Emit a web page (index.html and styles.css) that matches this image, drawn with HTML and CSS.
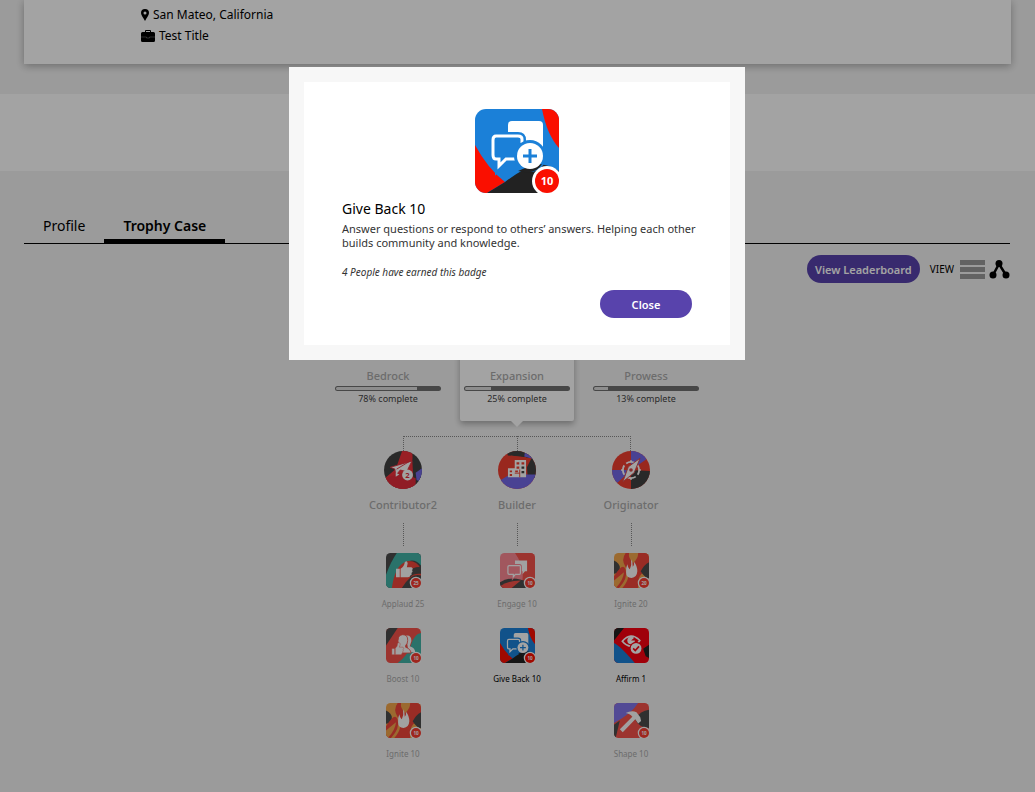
FILE: index.html
```html
<!DOCTYPE html>
<html lang="en">
<head>
    <meta charset="UTF-8">
    <meta name="viewport" content="width=device-width, initial-scale=1.0">
    <title>Trophy Case</title>
    <link rel="stylesheet" href="styles.css">
</head>
<body>
    <!-- shared badge artwork -->
    <svg class="sprite" aria-hidden="true">
        <defs>
            <clipPath id="tile"><rect width="84" height="84" rx="11"/></clipPath>
            <clipPath id="disc"><circle cx="42" cy="42" r="42"/></clipPath>
        </defs>
        <symbol id="ring" viewBox="0 0 84 84">
            <circle cx="72" cy="72" r="15" fill="#fff"/>
            <circle cx="72" cy="72" r="12" fill="#fa0f00"/>
        </symbol>
        <symbol id="flame" viewBox="0 0 84 84">
            <g clip-path="url(#tile)">
                <rect width="84" height="84" fill="#f29423"/>
                <path d="M0 18Q14 24 14 36T0 50z" fill="#222"/>
                <path d="M28 0H84V28Q66 36 58 84H12Q34 60 28 40T0 56V84H20Q44 56 28 34Q16 16 28 0z" fill="#f01c0c"/>
                <path d="M0 84V66Q14 54 24 46Q22 66 4 84z" fill="#f29423"/>
                <path d="M36 0H58Q58 14 46 24Q34 12 36 0z" fill="#f29423"/>
                <path d="M84 22V62Q74 60 64 44Q72 28 84 22z" fill="#222"/>
                <path d="M58 84Q56 62 66 50Q74 60 84 62V84z" fill="#f29423"/>
                <path d="M41 15Q46 21 45 33Q49 29 48 21Q56 31 56 44Q55 59 42 60Q29 59 29 46Q28 36 32 27Q34 37 38 39Q43 29 41 15z" fill="#fff"/>
            </g>
        </symbol>
        <symbol id="giveback" viewBox="0 0 84 84">
            <g clip-path="url(#tile)">
                <rect width="84" height="84" fill="#1b80d8"/>
                <path d="M67 0Q72 26 84 39V0z" fill="#fa0f00"/>
                <path d="M0 36Q13 60 30 73L12 84H0z" fill="#fa0f00"/>
                <path d="M12 84L30 73Q50 58 62 55Q76 56 84 62V84z" fill="#222"/>
                <rect x="33" y="12" width="35" height="30" rx="4" fill="#fff"/>
                <path d="M21 27H43Q47 27 47 31V46Q47 50 43 50H31L24 57V50H21Q18 50 18 46V31Q18 27 21 27z" fill="#1b80d8" stroke="#1b80d8" stroke-width="8"/>
                <path d="M47 34V30Q47 27 43 27H21Q18 27 18 31V46Q18 50 21 50H24V57L31 50H42" fill="none" stroke="#fff" stroke-width="3"/>
                <circle cx="55" cy="47" r="16" fill="#1b80d8"/>
                <path d="M43 62Q53 57 67 55Q61 65 49 63z" fill="#222"/>
                <circle cx="55" cy="47" r="13" fill="#fff"/>
                <path d="M55 40V54M48 47H62" stroke="#1b80d8" stroke-width="3"/>
            </g>
        </symbol>
    </svg>

    <header class="hero">
        <div class="user-card">
            <p>
                <svg class="pin" viewBox="0 0 8 12"><path fill-rule="evenodd" d="M4 0a4 4 0 0 0-4 4c0 2.500 2.500 4.500 4 8 1.500-3.500 4-5.500 4-8a4 4 0 0 0-4-4zm0 2.500a1.500 1.500 0 1 1 0 3 1.500 1.500 0 0 1 0-3z"/></svg>
                San Mateo, California
            </p>
            <p>
                <svg class="case" viewBox="0 0 14 12"><path fill-rule="evenodd" d="M4 2V1q0-1 1-1h4q1 0 1 1v1h2.500Q14 2 14 3.500V10.500q0 1.500-1.500 1.500h-11Q0 12 0 10.500V3.500Q0 2 1.500 2zm1 0h4V1H5z"/><path d="M0 7h5.500v1h3V7H14" fill="none" stroke="#777" stroke-width=".6"/></svg>
                Test Title
            </p>
        </div>
    </header>
    <div class="band"></div>

    <main>
        <nav class="tabs">
            <a href="#profile">Profile</a>
            <a href="#trophy" class="active">Trophy Case</a>
        </nav>

        <div class="toolbar">
            <button type="button" class="btn">View Leaderboard</button>
            <span class="view-label">VIEW</span>
            <button type="button" class="icon-btn" aria-label="List view">
                <svg width="25" height="19" viewBox="0 0 25 19"><path d="M0 0h25v5H0zM0 7h25v5H0zM0 14h25v5H0z" fill="#999"/></svg>
            </button>
            <button type="button" class="icon-btn" aria-label="Tree view">
                <svg width="21" height="19" viewBox="0 0 21 19"><path d="M4 15L10 4L17 15" fill="none" stroke="#000" stroke-width="2.500"/><circle cx="10" cy="3.500" r="3.500"/><circle cx="4" cy="15" r="3.500"/><circle cx="17" cy="15" r="3.500"/></svg>
            </button>
        </div>

        <section class="stages">
            <div class="stage">
                <h3>Bedrock</h3>
                <div class="bar"><span style="width: 78%"></span></div>
                <small>78% complete</small>
            </div>
            <div class="stage selected">
                <h3>Expansion</h3>
                <div class="bar"><span style="width: 25%"></span></div>
                <small>25% complete</small>
            </div>
            <div class="stage">
                <h3>Prowess</h3>
                <div class="bar"><span style="width: 13%"></span></div>
                <small>13% complete</small>
            </div>
        </section>

        <div class="connector"><span></span><span></span></div>

        <section class="tracks">
            <div class="track">
                <svg class="medal" viewBox="0 0 84 84">
                    <g clip-path="url(#disc)">
                        <rect width="84" height="84" fill="#222"/>
                        <path d="M40 0H62L70 84H10L2 60L26 40z" fill="#f0101a"/>
                        <path d="M62 10Q68 50 84 56V84H66z" fill="#222"/>
                        <path d="M70 48L84 38V70L72 64z" fill="#5c50e6"/>
                        <path d="M0 60L40 48L70 60V84H0z" fill="#e00b1c"/>
                    </g>
                    <path d="M14 36L62 22L50 46L36 42L26 54L24 40zM58 22L28 40" fill="#fff" stroke="#e00b1c" stroke-width="2"/>
                    <path d="M26 48l8 4-8 5z" fill="#fff"/>
                    <circle cx="52" cy="53" r="12" fill="#fff"/>
                    <text x="52" y="59" class="num">2</text>
                </svg>
                <h4>Contributor2</h4>
                <div class="line"></div>
                <div class="badge">
                    <svg viewBox="0 0 84 84">
                        <g clip-path="url(#tile)">
                            <rect width="84" height="84" fill="#222"/>
                            <path d="M26 0H84V30Q66 8 42 26Q22 46 18 84H0V52Q12 20 26 0z" fill="#16a394"/>
                            <path d="M14 84Q22 28 50 20Q72 16 84 38V54Q60 46 38 84z" fill="#f01c0c"/>
                            <path d="M52 46Q66 32 84 34V50Q66 48 58 58z" fill="#222"/>
                        </g>
                        <path d="M24 38h9v20h-9zM35 38Q44 32 45 22Q51 17 52 25L50 34H61Q67 38 62 41Q66 45 61 48Q63 53 58 54Q58 58 53 58H35z" fill="#fff"/>
                        <use href="#ring"/>
                        <text x="72" y="76" class="count">25</text>
                    </svg>
                    <p>Applaud 25</p>
                </div>
                <div class="badge">
                    <svg viewBox="0 0 84 84">
                        <g clip-path="url(#tile)">
                            <rect width="84" height="84" fill="#f52b20"/>
                            <path d="M0 0H28L0 42z" fill="#222"/>
                            <path d="M84 12V84H28Q52 66 60 40T84 12z" fill="#16a394"/>
                        </g>
                        <path d="M48 18Q61 16 61 31L57 44Q70 48 70 58H54z" fill="#fff"/>
                        <path d="M40 16Q53 16 52 30Q52 38 47 42V46Q59 50 60 60H30V42Q25 16 40 16z" fill="#fff" stroke="#f52b20" stroke-width="2"/>
                        <path d="M14 49h7v15h-7zM22 49Q28 45 28 36Q34 33 34 40L32 46H41Q44 50 41 52Q43 56 40 57Q41 61 38 61Q38 65 34 64H22z" fill="#fff" stroke="#f52b20"/>
                        <use href="#ring"/>
                        <text x="72" y="76" class="count">10</text>
                    </svg>
                    <p>Boost 10</p>
                </div>
                <div class="badge">
                    <svg viewBox="0 0 84 84">
                        <use href="#flame"/>
                        <use href="#ring"/>
                        <text x="72" y="76" class="count">10</text>
                    </svg>
                    <p>Ignite 10</p>
                </div>
            </div>

            <div class="track">
                <svg class="medal" viewBox="0 0 84 84">
                    <g clip-path="url(#disc)">
                        <rect width="84" height="84" fill="#f0200f"/>
                        <path d="M18 0H84V60H66L62 14L22 10z" fill="#222"/>
                        <path d="M60 0L84 20L58 12z" fill="#5c50e6"/>
                        <path d="M28 10L74 16L62 40L40 50z" fill="#f0200f"/>
                        <path d="M0 68L26 52H84V84H0z" fill="#5c50e6"/>
                    </g>
                    <path d="M22 38H37V20H62V58H22z" fill="#fff"/>
                    <path d="M41 25h6v5h-6zM52 25h6v5h-6zM41 34h6v5h-6zM26 43h5v4h-5zM38 43h6v4h-6zM26 51h5v4h-5z" fill="#f0200f"/>
                    <path d="M52 34h6v5h-6zM52 44h6v5h-6z" fill="#222"/>
                    <path d="M48 41v17M37 49h11" stroke="#f0200f" stroke-width="2"/>
                </svg>
                <h4>Builder</h4>
                <div class="line"></div>
                <div class="badge">
                    <svg viewBox="0 0 84 84">
                        <g clip-path="url(#tile)">
                            <rect width="84" height="84" fill="#ff6f7d"/>
                            <path d="M36 0H84V84H48Q66 44 36 0z" fill="#f52b20"/>
                            <path d="M0 70Q30 52 66 70L84 84H0z" fill="#222"/>
                            <path d="M0 80Q20 66 50 66L28 84H0z" fill="#f52b20"/>
                        </g>
                        <path d="M36 18H65V44H60L54 51V44H36z" fill="#fff"/>
                        <path d="M22 30H47Q49 30 49 33V48Q49 51 47 51H37L32 57V51H22Q19 51 19 48V33Q19 30 22 30z" fill="#ff6f7d" stroke="#ff6f7d" stroke-width="7"/>
                        <path d="M22 30H47Q49 30 49 33V48Q49 51 47 51H37L32 57V51H22Q19 51 19 48V33Q19 30 22 30z" fill="#ff6f7d" stroke="#fff" stroke-width="3"/>
                        <use href="#ring"/>
                        <text x="72" y="76" class="count">10</text>
                    </svg>
                    <p>Engage 10</p>
                </div>
                <div class="badge earned">
                    <svg viewBox="0 0 84 84">
                        <use href="#giveback"/>
                        <use href="#ring"/>
                        <text x="72" y="76" class="count">10</text>
                    </svg>
                    <p>Give Back 10</p>
                </div>
            </div>

            <div class="track">
                <svg class="medal" viewBox="0 0 84 84">
                    <g clip-path="url(#disc)">
                        <rect width="84" height="84" fill="#f0200f"/>
                        <path d="M42 42V0H66L76 18z" fill="#5c50e6"/>
                        <path d="M42 42L84 44V84H42z" fill="#222"/>
                        <path d="M42 42H0V62L12 70z" fill="#5c50e6"/>
                    </g>
                    <circle cx="42" cy="42" r="18" fill="none" stroke="#fff" stroke-width="4" stroke-dasharray="22 6" stroke-dashoffset="11"/>
                    <path d="M62 16L49 48L24 68L36 35z" fill="#fff" stroke="#d42a2a" stroke-width="2"/>
                    <circle cx="42" cy="42" r="4" fill="#d42a2a"/>
                    <path d="M42 20v5M42 59v5M20 42h5M59 42h5" stroke="#fff" stroke-width="3"/>
                </svg>
                <h4>Originator</h4>
                <div class="line"></div>
                <div class="badge">
                    <svg viewBox="0 0 84 84">
                        <use href="#flame"/>
                        <use href="#ring"/>
                        <text x="72" y="76" class="count">20</text>
                    </svg>
                    <p>Ignite 20</p>
                </div>
                <div class="badge earned">
                    <svg viewBox="0 0 84 84">
                        <g clip-path="url(#tile)">
                            <rect width="84" height="84" fill="#fa0010"/>
                            <path d="M0 0H24L0 30zM84 40L70 50L76 68L84 72z" fill="#222"/>
                            <path d="M0 36Q16 44 50 84H0z" fill="#1b80d8"/>
                        </g>
                        <path d="M20 32Q40 8 62 30Q52 44 40 44Q28 42 20 32z" fill="none" stroke="#fff" stroke-width="4"/>
                        <circle cx="41" cy="30" r="9" fill="#fff"/>
                        <path d="M41 30L50 22L52 30z" fill="#fa0010"/>
                        <circle cx="53" cy="49" r="16" fill="#fa0010"/>
                        <circle cx="53" cy="49" r="13" fill="#fff"/>
                        <path d="M46 49L51 54L60 44" fill="none" stroke="#fa0010" stroke-width="4"/>
                    </svg>
                    <p>Affirm 1</p>
                </div>
                <div class="badge">
                    <svg viewBox="0 0 84 84">
                        <g clip-path="url(#tile)">
                            <rect width="84" height="84" fill="#f52b20"/>
                            <path d="M0 0H58Q42 26 0 48z" fill="#6455e8"/>
                            <path d="M84 16V60Q60 60 50 38Q64 18 84 16z" fill="#222"/>
                            <path d="M0 52L14 42L4 84H0z" fill="#222"/>
                        </g>
                        <path d="M28 24Q42 17 54 22L63 34L65 43L58 49L51 39L21 70L14 63L44 33Q38 25 28 24z" fill="#fff"/>
                        <use href="#ring"/>
                        <text x="72" y="76" class="count">10</text>
                    </svg>
                    <p>Shape 10</p>
                </div>
            </div>
        </section>
    </main>

    <div class="overlay">
        <div class="modal" role="dialog" aria-labelledby="badgeTitle">
            <div class="modal-body">
                <svg class="modal-badge" viewBox="0 0 84 84">
                    <use href="#giveback"/>
                    <use href="#ring"/>
                    <text x="72" y="76" class="count">10</text>
                </svg>
                <h2 id="badgeTitle">Give Back 10</h2>
                <p>Answer questions or respond to others’ answers. Helping each other builds community and knowledge.</p>
                <p class="earned-by">4 People have earned this badge</p>
                <button type="button" class="btn close">Close</button>
            </div>
        </div>
    </div>
</body>
</html>
```
FILE: styles.css
```css
* {
    box-sizing: border-box;
}
body {
    margin: 0;
    background: #f3f3f3;
    color: #000;
    font-family: "Noto Sans", "Open Sans", sans-serif;
    font-size: 12px;
}
h2, h3, h4, p {
    margin: 0;
    font-weight: normal;
}
.sprite {
    position: absolute;
    width: 0;
    height: 0;
}
.count {
    font-size: 11px;
    font-weight: bold;
    fill: #fff;
    text-anchor: middle;
}
.num {
    font-size: 17px;
    font-weight: bold;
    fill: #e00b1c;
    text-anchor: middle;
}

/* header */
.hero {
    padding: 0 24px 30px;
}
.user-card {
    padding: 4px 20px 18px 117px;
    background: #fff;
    box-shadow: 0 2px 8px rgba(0, 0, 0, 0.3);
}
.user-card p {
    display: flex;
    align-items: center;
    gap: 4px;
    line-height: 21px;
}
.pin {
    width: 8px;
    height: 12px;
}
.case {
    width: 14px;
    height: 12px;
}
.band {
    height: 77px;
    background: #fff;
}

/* tabs and toolbar */
main {
    padding: 34px 25px 28px 24px;
}
.tabs {
    display: flex;
    border-bottom: 1px solid #000;
}
.tabs a {
    padding: 11px 19px 3px;
    border-bottom: 4px solid transparent;
    color: #000;
    font-size: 14px;
    line-height: 20px;
    text-decoration: none;
}
.tabs .active {
    border-color: #000;
    font-weight: 600;
}
.toolbar {
    display: flex;
    align-items: center;
    justify-content: flex-end;
    gap: 4px;
    margin-top: 11px;
}
.btn {
    height: 28px;
    padding: 0 8px;
    border: none;
    border-radius: 14px;
    background: #5843ac;
    color: #fff;
    font-family: inherit;
    font-size: 11px;
    font-weight: 600;
    cursor: pointer;
}
.view-label {
    margin: 0 2px 0 6px;
    font-size: 10px;
}
.icon-btn {
    padding: 0;
    border: none;
    background: none;
    cursor: pointer;
}
.icon-btn svg {
    display: block;
}

/* stages */
.stages {
    display: grid;
    grid-template-columns: repeat(3, 114px);
    justify-content: center;
    gap: 15px;
    margin-top: 17px;
}
.stage {
    position: relative;
    padding: 68px 4px 16px;
    text-align: center;
}
.stage h3 {
    color: #aaa;
    font-size: 11px;
    font-weight: 500;
    line-height: 16px;
}
.selected {
    background: #fff;
    border-radius: 2px;
    box-shadow: 0 3px 6px rgba(0, 0, 0, 0.3);
}
.selected::after {
    content: "";
    position: absolute;
    top: 100%;
    left: 50%;
    margin-left: -6px;
    border: 6px solid transparent;
    border-top-color: #fff;
    border-bottom: none;
}
.bar {
    height: 5px;
    margin: 2px 0;
    padding: 1px;
    border-radius: 3px;
    background: #707070;
}
.bar span {
    display: block;
    height: 3px;
    border-radius: 2px 0 0 2px;
    background: #ddd;
}
.stage small {
    display: block;
    color: #444;
    font-size: 9px;
    line-height: 12px;
}

/* tracks */
.connector {
    display: grid;
    grid-template-columns: 114px 114px;
    justify-content: center;
    margin-top: 15px;
}
.connector span {
    height: 15px;
    border-top: 1px dotted #888;
    border-left: 1px dotted #888;
}
.connector span:last-child {
    border-right: 1px dotted #888;
}
.tracks {
    display: grid;
    grid-template-columns: repeat(3, 114px);
    justify-content: center;
}
.track {
    text-align: center;
}
.medal {
    display: block;
    width: 38px;
    height: 38px;
    margin: 0 auto;
    opacity: 0.85;
}
.track h4 {
    margin-top: 6px;
    color: #aaa;
    font-size: 11px;
    font-weight: 500;
    line-height: 20px;
}
.line {
    width: 1px;
    height: 23px;
    margin: 8px auto 7px;
    border-left: 1px dotted #888;
}
.badge {
    height: 75px;
}
.badge svg {
    display: block;
    width: 35px;
    height: 35px;
    margin: 0 auto 9px;
    opacity: 0.8;
}
.badge p {
    color: #aaa;
    font-size: 8px;
    line-height: 14px;
}
.badge.earned svg {
    opacity: 1;
}
.badge.earned p {
    color: #000;
}

/* badge dialog */
.overlay {
    position: fixed;
    inset: 0;
    padding: 67px 1px 0 0;
    background: rgba(0, 0, 0, 0.36);
}
.modal {
    width: 456px;
    max-width: 100%;
    margin: 0 auto;
    padding: 15px;
    background: #f7f7f7;
}
.modal-body {
    display: flow-root;
    padding: 27px 30px;
    background: #fff;
}
.modal-badge {
    display: block;
    width: 84px;
    height: 84px;
    margin: 0 auto 5px;
}
.modal-body h2 {
    margin: 0 0 2px 8px;
    font-size: 14px;
    line-height: 22px;
}
.modal-body p {
    margin-left: 8px;
    color: #333;
    font-size: 11px;
    line-height: 14px;
}
.modal-body .earned-by {
    margin-top: 15px;
    font-size: 10px;
    font-style: italic;
}
.close {
    display: block;
    width: 92px;
    margin: 11px 8px 0 auto;
}
```
